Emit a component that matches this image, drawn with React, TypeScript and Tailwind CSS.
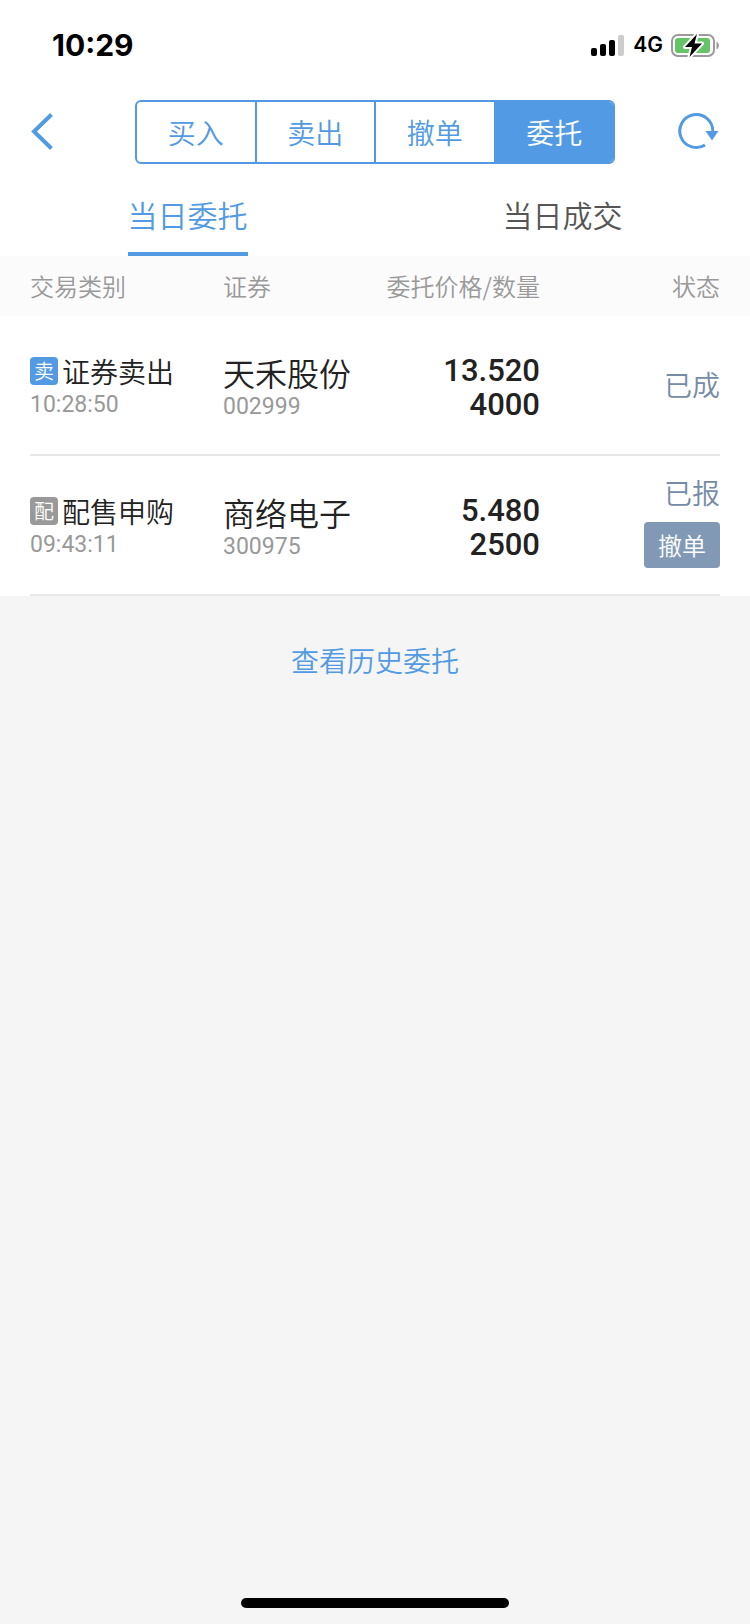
interface Order {
  tag: string;
  tagStyle: string;
  type: string;
  time: string;
  name: string;
  code: string;
  price: string;
  amount: string;
  status: string;
  cancelable: boolean;
}

const actions = ["买入", "卖出", "撤单", "委托"];
const tabs = ["当日委托", "当日成交"];

const orders: Order[] = [
  {
    tag: "卖",
    tagStyle: "bg-[#529ae3]",
    type: "证券卖出",
    time: "10:28:50",
    name: "天禾股份",
    code: "002999",
    price: "13.520",
    amount: "4000",
    status: "已成",
    cancelable: false,
  },
  {
    tag: "配",
    tagStyle: "bg-[#999999]",
    type: "配售申购",
    time: "09:43:11",
    name: "商络电子",
    code: "300975",
    price: "5.480",
    amount: "2500",
    status: "已报",
    cancelable: true,
  },
];

function StatusBar() {
  return (
    <div className="flex h-[88px] items-center justify-between pt-[2px] pr-[30px] pl-[52px] font-['Inter',sans-serif] text-black">
      <span className="text-[30px] leading-8 font-bold">10:29</span>
      <div className="flex items-center gap-2">
        <svg width="34" height="22" viewBox="0 0 34 22" aria-hidden="true">
          <rect x="0" y="14" width="6" height="8" rx="2" />
          <rect x="9" y="10" width="6" height="12" rx="2" />
          <rect x="18" y="6" width="6" height="16" rx="2" />
          <rect x="27" y="1" width="6" height="21" rx="2" fill="#cccccc" />
        </svg>
        <span className="text-[21px] leading-6 font-semibold">4G</span>
        <svg width="49" height="26" viewBox="0 0 49 26" aria-hidden="true">
          <rect x="1" y="3" width="42" height="21" rx="6" fill="none" stroke="#9a9a9a" strokeWidth="2" />
          <path d="M45.500 9.500 Q48 11 48 13.500 Q48 16 45.500 17.500 Z" fill="#9a9a9a" />
          <rect x="4" y="6" width="35" height="15" rx="3" fill="#65c466" />
          <path
            d="M26 2 L14 15 L21 15 L18.500 25 L31 11.500 L23.500 11.500 Z"
            stroke="white"
            strokeWidth="4"
            strokeLinejoin="round"
          />
          <path d="M26 2 L14 15 L21 15 L18.500 25 L31 11.500 L23.500 11.500 Z" />
        </svg>
      </div>
    </div>
  );
}

function NavBar() {
  return (
    <header className="flex h-[88px] items-center justify-between px-[30px]">
      <button aria-label="返回" className="w-[43px]">
        <svg width="24" height="40" viewBox="0 0 24 40" fill="none" stroke="#529ae3" strokeWidth="4" aria-hidden="true">
          <path d="M21.500 2.500 L4 19.500 L21.500 36.500" />
        </svg>
      </button>
      <div className="flex h-16 w-[480px] overflow-hidden rounded-md border-2 border-[#529ae3]">
        {actions.map((action) => (
          <button
            key={action}
            className={
              action === "委托"
                ? "flex-1 bg-[#529ae3] text-[28px] leading-10 text-white"
                : "flex-1 border-r-2 border-[#529ae3] text-[28px] leading-10 text-[#529ae3]"
            }
          >
            {action}
          </button>
        ))}
      </div>
      <button aria-label="刷新" className="flex w-[43px] justify-end">
        <svg width="42" height="40" viewBox="0 0 42 40" aria-hidden="true">
          <path d="M34.800 19 A16.500 16.500 0 1 0 27 33" fill="none" stroke="#529ae3" strokeWidth="3" />
          <path d="M27.500 19 H40.500 L34 28.500 Z" fill="#529ae3" />
        </svg>
      </button>
    </header>
  );
}

function OrderRow({ order }: { order: Order }) {
  return (
    <tr>
      <td className="p-0 pl-[30px]">
        <div className="flex h-[140px] flex-col justify-center border-b-2 border-[#e8e8e8]">
          <div className="flex items-center gap-1">
            <span className={`flex size-7 items-center justify-center rounded text-[20px] leading-7 text-white ${order.tagStyle}`}>
              {order.tag}
            </span>
            <span className="text-[28px] leading-10 text-[#222222]">{order.type}</span>
          </div>
          <span className="font-['Roboto',sans-serif] text-[23px] leading-7 font-normal text-[#999999]">{order.time}</span>
        </div>
      </td>
      <td className="p-0">
        <div className="flex h-[140px] flex-col justify-center gap-[3px] border-b-2 border-[#e8e8e8]">
          <span className="text-[32px] leading-10 text-[#222222]">{order.name}</span>
          <span className="font-['Roboto',sans-serif] text-[23px] leading-6 font-normal text-[#999999]">{order.code}</span>
        </div>
      </td>
      <td className="p-0">
        <div className="flex h-[140px] flex-col items-end justify-center border-b-2 border-[#e8e8e8] pt-[6px] font-['Roboto',sans-serif] text-[31px] leading-[34px] font-medium text-[#222222]">
          <span>{order.price}</span>
          <span>{order.amount}</span>
        </div>
      </td>
      <td className="p-0 pr-[30px]">
        <div className="flex h-[140px] flex-col items-end justify-center gap-[18px] border-b-2 border-[#e8e8e8] pb-[2px]">
          <span className="text-[28px] leading-6 text-[#768ba6]">{order.status}</span>
          {order.cancelable && (
            <button className="h-[46px] rounded bg-[#8299b5] px-[14px] text-[24px] leading-8 text-white">撤单</button>
          )}
        </div>
      </td>
    </tr>
  );
}

export default function App() {
  return (
    <div className="flex min-h-screen flex-col bg-[#f5f5f5] font-['Noto_Sans_CJK_SC',sans-serif] font-[350]">
      <div className="bg-white">
        <StatusBar />
        <NavBar />
        <nav className="flex h-20">
          {tabs.map((tab) => (
            <div key={tab} className="flex flex-1 justify-center">
              <button
                className={
                  tab === "当日委托"
                    ? "border-b-4 border-[#529ae3] text-[30px] leading-10 text-[#529ae3]"
                    : "border-b-4 border-transparent text-[30px] leading-10 text-[#555555]"
                }
              >
                {tab}
              </button>
            </div>
          ))}
        </nav>
        <table className="w-full table-fixed border-collapse">
          <thead>
            <tr className="h-[60px] bg-[#fbfbfb] text-[24px] leading-8 text-[#999999]">
              <th className="w-[223px] p-0 pl-[30px] text-left font-[350]">交易类别</th>
              <th className="p-0 text-left font-[350]">证券</th>
              <th className="w-[165px] p-0 text-right font-[350]">委托价格/数量</th>
              <th className="w-[210px] p-0 pr-[30px] text-right font-[350]">状态</th>
            </tr>
          </thead>
          <tbody>
            {orders.map((order) => (
              <OrderRow key={order.code} order={order} />
            ))}
          </tbody>
        </table>
      </div>
      <a href="#history" className="mt-11 self-center text-[28px] leading-10 text-[#529ae3]">
        查看历史委托
      </a>
      <div className="mt-auto mb-4 h-[10px] w-[268px] self-center rounded-full bg-black" />
    </div>
  );
}
